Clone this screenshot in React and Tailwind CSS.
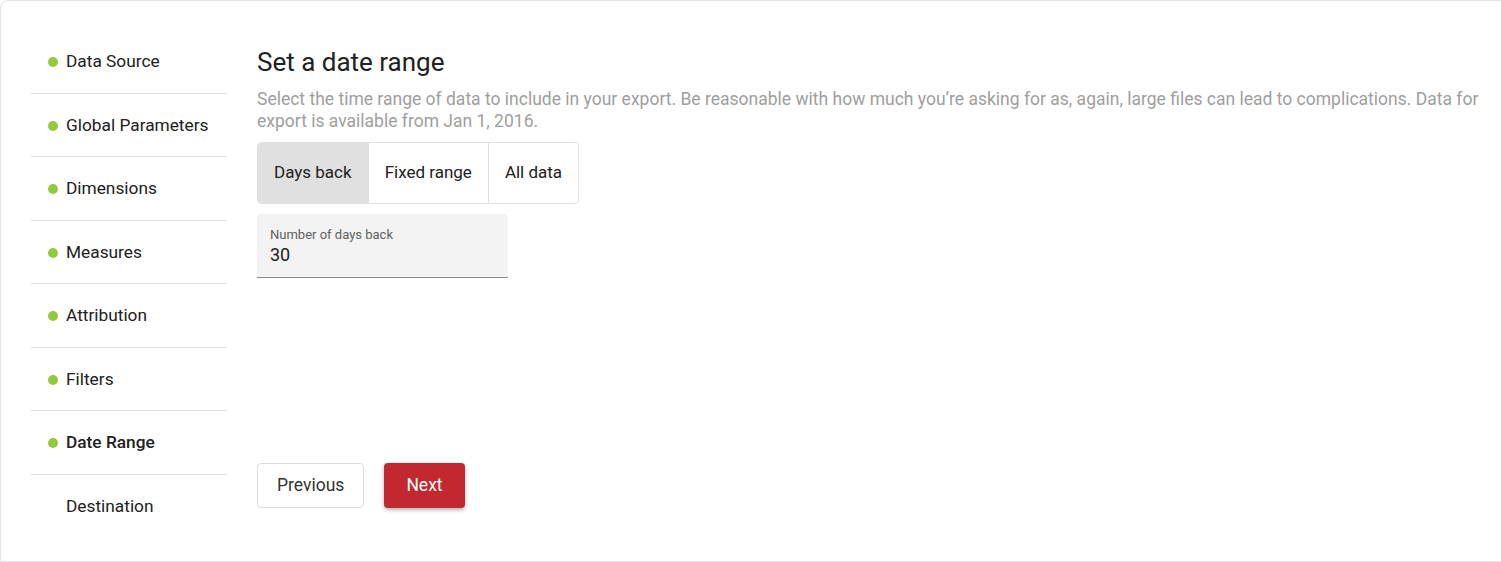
import React, { useState } from 'react';

// Steps of the export wizard
const steps = [
    { id: 'source', name: 'Data Source', done: true },
    { id: 'global', name: 'Global Parameters', done: true },
    { id: 'dimensions', name: 'Dimensions', done: true },
    { id: 'measures', name: 'Measures', done: true },
    { id: 'attribution', name: 'Attribution', done: true },
    { id: 'filters', name: 'Filters', done: true },
    { id: 'date', name: 'Date Range', done: true, active: true },
    { id: 'destination', name: 'Destination', done: false },
];

const modes = ['Days back', 'Fixed range', 'All data'];

const App = () => {
    const [mode, setMode] = useState('Days back');
    const [days, setDays] = useState('30');

    return (
        <div className="h-[562px] w-full bg-white font-['Roboto','Liberation_Sans',sans-serif] text-[#212121]">
            <div className="flex h-full w-[calc(100%+12px)] rounded-tl-lg border border-[#e3e3e3] pl-[30px] pt-[29px]">
                {/* --- STEP LIST --- */}
                <nav className="w-[196px] shrink-0">
                    {steps.map((step, i) => (
                        <div
                            key={step.id}
                            className={
                                'flex h-[63.5px] items-center gap-2 pl-[17px] pt-[2px] text-[17.3px] ' +
                                (i < steps.length - 1 ? 'border-b border-[#e0e0e0] ' : '') +
                                (step.active ? 'font-medium' : '')
                            }
                        >
                            <span className={'h-[10px] w-[10px] rounded-full ' + (step.done ? 'bg-[#95c93d]' : 'bg-transparent')}></span>
                            <span>{step.name}</span>
                        </div>
                    ))}
                </nav>

                {/* --- MAIN PANEL --- */}
                <main className="ml-[30px] flex w-[1232px] flex-col pt-[16px]">
                    <h2 className="text-[26px] leading-8 text-[#212121]">Set a date range</h2>
                    <p className="mt-[10px] text-[17.5px] leading-[22px] text-[#9e9e9e]">
                        Select the time range of data to include in your export. Be reasonable with how much you’re asking for as, again, large files can lead to complications. Data for export is available from Jan 1, 2016.
                    </p>

                    <div className="mt-[10px] flex h-[62px] w-fit overflow-hidden rounded border border-[#e0e0e0]">
                        {modes.map((m, i) => (
                            <button
                                key={m}
                                onClick={() => setMode(m)}
                                className={
                                    'px-4 text-[17px] ' +
                                    (i > 0 ? 'border-l border-[#e0e0e0] ' : '') +
                                    (mode === m ? 'bg-[#e0e0e0]' : 'bg-white')
                                }
                            >
                                {m}
                            </button>
                        ))}
                    </div>

                    <label className="mt-[10px] flex h-[64px] w-[251px] flex-col rounded-t border-b border-[#8c8c8c] bg-[#f3f3f3] px-[13px] pt-[13px]">
                        <span className="text-[13px] leading-4 text-[#616161]">Number of days back</span>
                        <input
                            value={days}
                            onChange={(e) => setDays(e.target.value)}
                            className="bg-transparent text-lg leading-6 text-[#212121] outline-none"
                        />
                    </label>

                    <div className="mt-[185px] flex gap-5">
                        <button className="h-[45px] rounded border border-[#dcdcdc] bg-white px-[19px] text-[17.5px] text-[#333]">
                            Previous
                        </button>
                        <button className="h-[45px] rounded bg-[#c1282f] px-[22px] text-[17.5px] text-white shadow-[0_2px_4px_rgba(0,0,0,0.3)]">
                            Next
                        </button>
                    </div>
                </main>
            </div>
        </div>
    );
};

export default App;
